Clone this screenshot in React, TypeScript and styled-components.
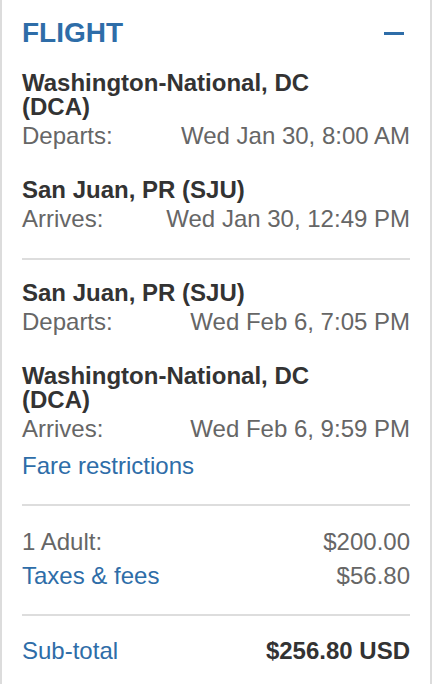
import React from 'react';
import styled, {createGlobalStyle} from 'styled-components';

type Segment = {
    place: string;
    label: string;
    when: string;
};

type Leg = {
    segments: Segment[];
    hasRestrictions: boolean;
};

const legs: Leg[] = [
    {
        segments: [
            {place: 'Washington-National, DC (DCA)', label: 'Departs:', when: 'Wed Jan 30, 8:00 AM'},
            {place: 'San Juan, PR (SJU)', label: 'Arrives:', when: 'Wed Jan 30, 12:49 PM'},
        ],
        hasRestrictions: false,
    },
    {
        segments: [
            {place: 'San Juan, PR (SJU)', label: 'Departs:', when: 'Wed Feb 6, 7:05 PM'},
            {place: 'Washington-National, DC (DCA)', label: 'Arrives:', when: 'Wed Feb 6, 9:59 PM'},
        ],
        hasRestrictions: true,
    },
];

const GlobalStyle = createGlobalStyle`
    html, body {
        margin: 0;
        padding: 0;
        background: #fff;
    }
    body {
        font-family: 'Liberation Sans', Arial, Helvetica, sans-serif;
        -webkit-font-smoothing: antialiased;
    }
`;

const Card = styled.section`
    box-sizing: border-box;
    width: 432px;
    min-height: 684px;
    padding: 16px 20px 16px;
    border-left: 2px solid #dcdcdc;
    border-right: 2px solid #dcdcdc;
    background: #fff;
`;

const Header = styled.div`
    display: flex;
    align-items: center;
    justify-content: space-between;
    height: 34px;
`;

const Title = styled.h2`
    margin: 0;
    font-size: 28px;
    line-height: 34px;
    font-weight: 700;
    color: #2e6da8;
`;

const Collapse = styled.button`
    display: flex;
    align-items: center;
    height: 34px;
    padding: 0 6px 0 0;
    border: none;
    background: none;
    cursor: pointer;
    span {
        display: block;
        width: 20px;
        height: 3px;
        margin-top: 1px;
        background: #2e6da8;
    }
`;

const LegBlock = styled.div<{$bottom: number}>`
    padding: 21px 0 ${({$bottom}) => $bottom}px;
    border-bottom: 2px solid #dddddd;
`;

const SegmentBlock = styled.div`
    & + & {
        margin-top: 25px;
    }
`;

// the airport name wraps its code onto a second line when it is long
const Place = styled.div`
    max-width: 320px;
    font-size: 24px;
    line-height: 24px;
    font-weight: 700;
    color: #333;
`;

const Row = styled.div`
    display: flex;
    justify-content: space-between;
    align-items: baseline;
    font-size: 24px;
    line-height: 34px;
    color: #666;
`;

const Link = styled.a`
    color: #2e6da8;
    text-decoration: none;
    cursor: pointer;
`;

const FareLink = styled(Link)`
    display: block;
    margin-top: 3px;
    font-size: 24px;
    line-height: 34px;
`;

const Prices = styled.div`
    padding: 19px 0 21px;
    border-bottom: 2px solid #dddddd;
`;

const Total = styled.div`
    padding-top: 18px;
`;

const Strong = styled.span`
    font-weight: 700;
    color: #333;
`;

const FlightSummary = (): JSX.Element => {
    return (
        <Card>
            <Header>
                <Title>{'FLIGHT'}</Title>
                <Collapse aria-label='Collapse'>
                    <span/>
                </Collapse>
            </Header>
            {legs.map((leg, i) => (
                <LegBlock
                    key={i}
                    $bottom={leg.hasRestrictions ? 21 : 22}
                >
                    {leg.segments.map((seg) => (
                        <SegmentBlock key={seg.label + seg.when}>
                            <Place>{seg.place}</Place>
                            <Row>
                                <span>{seg.label}</span>
                                <span>{seg.when}</span>
                            </Row>
                        </SegmentBlock>
                    ))}
                    {leg.hasRestrictions && <FareLink>{'Fare restrictions'}</FareLink>}
                </LegBlock>
            ))}
            <Prices>
                <Row>
                    <span>{'1 Adult:'}</span>
                    <span>{'$200.00'}</span>
                </Row>
                <Row>
                    <Link>{'Taxes & fees'}</Link>
                    <span>{'$56.80'}</span>
                </Row>
            </Prices>
            <Total>
                <Row>
                    <Link>{'Sub-total'}</Link>
                    <Strong>{'$256.80 USD'}</Strong>
                </Row>
            </Total>
        </Card>
    );
};

export default function App() {
    return (
        <>
            <GlobalStyle/>
            <FlightSummary/>
        </>
    );
}
